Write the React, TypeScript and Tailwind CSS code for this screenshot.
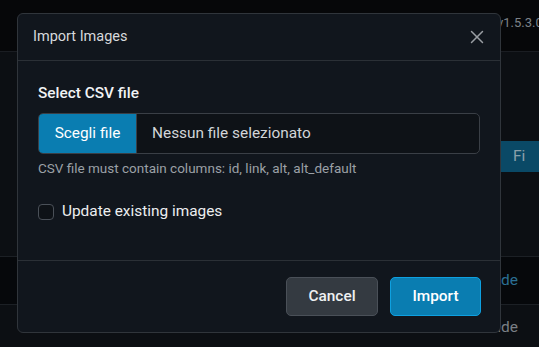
import { X } from 'lucide-react';

export default function App() {
  return (
    <div className="relative w-[539px] h-[347px] overflow-hidden bg-[#0c0f13] font-['Roboto',sans-serif]">
      {/* page behind the dialog, dimmed by the backdrop */}
      <div className="h-[52px] bg-[#060709] border-b border-[#1a1d22] pl-[497px] pt-[10px] whitespace-nowrap">
        <span className="text-[13px] text-[#7d8288] leading-[16px]">v1.5.3.0</span>
      </div>
      <div className="flex justify-end mt-[89px]">
        <div className="h-[31px] w-[38px] bg-[#0a4966] flex items-center pl-[12px] text-[15.5px] text-[#8aa0ab]">
          Fi
        </div>
      </div>
      <div className="mt-[84px] h-[49px] bg-[#06080b] border-y border-[#1c2025] flex items-center justify-end pr-[21px]">
        <span className="text-[15.5px] text-[#2b6f93]">Alt override</span>
      </div>
      <div className="h-[45px] flex items-center justify-end pr-[21px]">
        <span className="text-[15.5px] text-[#7a7f85]">Alt override</span>
      </div>

      {/* dialog */}
      <div className="absolute left-[17px] top-[13px] w-[484px] h-[320px] bg-[#11161d] border border-[#30353b] rounded-[6px] flex flex-col">
        <div className="h-[47px] px-[15px] flex items-center justify-between border-b border-[#2b3036]">
          <h2 className="text-[14.5px] text-[#d7d9dc] font-normal">Import Images</h2>
          <X size={22} strokeWidth={1.6} className="text-[#9a9ea3] -mr-[3px]" />
        </div>
        <div className="px-[20px] pt-[20px] pb-[20px] flex-1">
          <div className="text-[15.4px] leading-[24px] font-medium text-[#f1f3f5] mb-[8px]">Select CSV file</div>
          <div className="h-[41px] flex border border-[#3a3f46] rounded-[5px] overflow-hidden bg-[#0e1217]">
            <div className="w-[98px] bg-[#0a7db1] border-r border-[#3a3f46] flex items-center justify-center text-[15.4px] text-white">
              Scegli file
            </div>
            <div className="flex items-center pl-[15px] text-[15.4px] text-[#d2d5d9]">Nessun file selezionato</div>
          </div>
          <div className="mt-[4px] text-[13.5px] leading-[21px] text-[#9ba0a6]">
            CSV file must contain columns: id, link, alt, alt_default
          </div>
          <label className="mt-[21px] flex items-center gap-[8px] h-[24px]">
            <span className="w-[16px] h-[16px] rounded-[4px] border border-[#4a5058] bg-[#0e1217]" />
            <span className="text-[15.4px] text-[#eceef0]">Update existing images</span>
          </label>
        </div>
        <div className="h-[72px] border-t border-[#2b3036] flex items-center justify-end gap-[12px] px-[19px]">
          <button className="w-[92px] h-[39px] rounded-[5px] bg-[#343a41] border border-[#4a5058] text-[15.4px] font-medium text-[#eef0f2]">
            Cancel
          </button>
          <button className="w-[91px] h-[39px] rounded-[5px] bg-[#0a7db1] border border-[#0ea0e0] text-[15.4px] font-medium text-white">
            Import
          </button>
        </div>
      </div>
    </div>
  );
}
